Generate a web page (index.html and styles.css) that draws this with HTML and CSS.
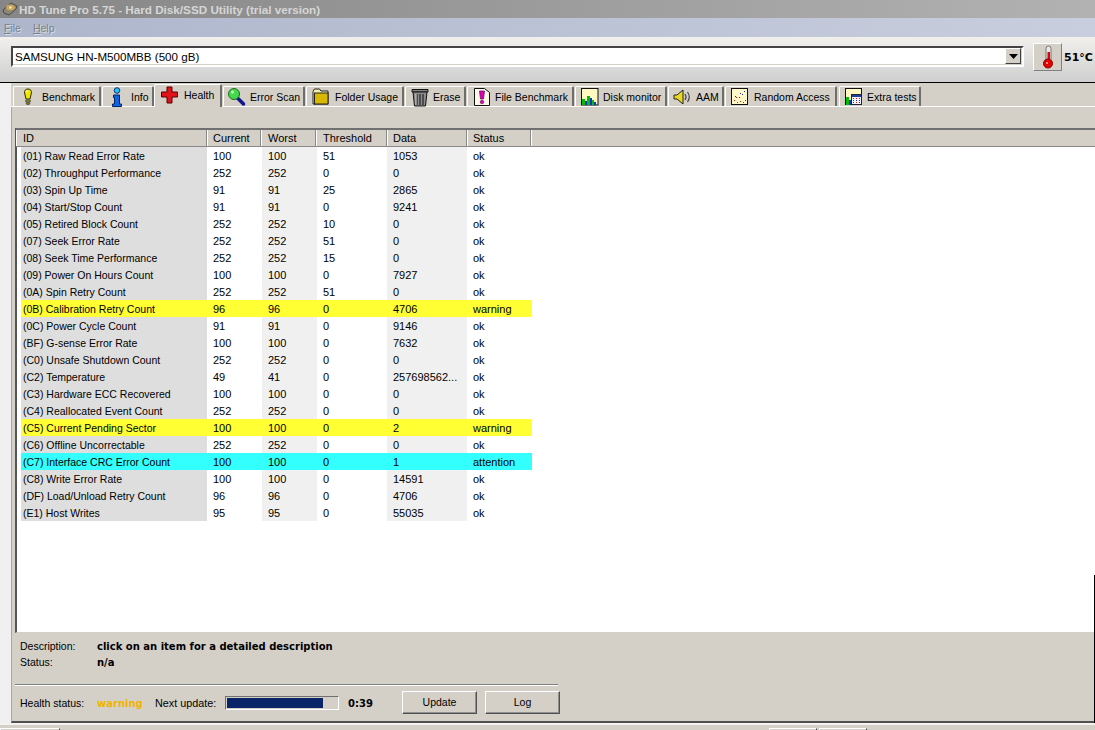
FILE: index.html
```html
<!DOCTYPE html>
<html lang="en">
<head>
<meta charset="utf-8">
<title>HD Tune Pro 5.75</title>
<link rel="stylesheet" href="styles.css">
</head>
<body>
<header class="titlebar">
  <svg class="app-icon" width="16" height="16" viewBox="0 0 16 16"><path d="M1 9 9 2l6 3-1 3-7 6-5-2z" fill="#8c8778" stroke="#4a4a44"/><ellipse cx="8.500" cy="6.500" rx="4.500" ry="3" fill="#c9a25a"/><circle cx="8.500" cy="6.500" r="1.300" fill="#efe9d8"/></svg>
  <span>HD Tune Pro 5.75 - Hard Disk/SSD Utility (trial version)</span>
</header>
<nav class="menubar"><span class="menu-item"><u>F</u>ile</span><span class="menu-item"><u>H</u>elp</span></nav>
<section class="toolbar">
  <div class="combo">
    <span class="combo-text">SAMSUNG HN-M500MBB (500 gB)</span>
    <span class="combo-btn"><svg width="9" height="5" viewBox="0 0 9 5"><path d="M0 0h9L4.500 5z" fill="#000"/></svg></span>
  </div>
  <button class="thermo"><svg width="12" height="24" viewBox="0 0 12 24"><rect x="4" y="1" width="5" height="17" rx="2.500" fill="#e8e8e8" stroke="#777"/><rect x="5.500" y="7" width="2.500" height="11" fill="#e30000"/><circle cx="6" cy="18.500" r="4.500" fill="#e30000" stroke="#8c0000"/><circle cx="5" cy="18" r="1" fill="#ffb0b0"/></svg></button>
  <strong class="temp">51°C</strong>
</section>

<main class="main">
  <div class="strip"></div>
  <div class="work">
    <div class="tabs">
      <div class="tab t-bench"><svg class="ico" width="18" height="20" viewBox="0 0 18 20"><path d="M9 2c2.800 0 3.800 2 3.400 4L11 12H7L5.600 6C5.200 4 6.200 2 9 2z" fill="#f2e600" stroke="#2a2a00"/><rect x="6.800" y="13" width="4.400" height="2" fill="#99942a" stroke="#333" stroke-width=".6"/><rect x="7.200" y="15.500" width="3.600" height="2" rx="1" fill="#77772a" stroke="#333" stroke-width=".6"/><path d="M7.500 5 8.200 3.500" stroke="#fff" stroke-width="1.200"/></svg><span>Benchmark</span></div>
      <div class="tab t-info"><svg class="ico" width="18" height="20" viewBox="0 0 18 20"><circle cx="9" cy="3.500" r="2.800" fill="#27c3ee" stroke="#0a2f80"/><path d="M5.500 8h6v9h2v2.500h-9V17h2v-6.500h-1z" fill="#0d64e6" stroke="#05205f"/></svg><span>Info</span></div>
      <div class="tab tab-on t-health"><svg class="ico" width="20" height="20" viewBox="0 0 20 20"><path d="M7 2h5v5h5.500v5H12v6H7v-6H1.500V7H7z" fill="#e2121a" stroke="#500" /></svg><span>Health</span></div>
      <div class="tab t-scan"><svg class="ico" width="20" height="20" viewBox="0 0 20 20"><path d="m10.500 11 6 6" stroke="#14148c" stroke-width="3.500" stroke-linecap="round"/><circle cx="7" cy="7" r="5.500" fill="#44d84a" stroke="#1b6d20"/><circle cx="5.500" cy="5" r="1.500" fill="#c9f7c9"/></svg><span>Error Scan</span></div>
      <div class="tab t-folder"><svg class="ico" width="18" height="20" viewBox="0 0 18 20"><path d="M1 4.500 2.500 2h5L9 4h7v13H1z" fill="#f4ecb0" stroke="#222"/><rect x="2.500" y="6" width="13.500" height="11" fill="#d8b800" stroke="#222"/></svg><span>Folder Usage</span></div>
      <div class="tab t-erase"><svg class="ico" width="18" height="20" viewBox="0 0 18 20"><path d="M1 2.500h16v2.500H1z" fill="#888" stroke="#111"/><path d="M2 5h14l-1.500 14h-11z" fill="#8c8c8c" stroke="#111"/><path d="M6 7v11M9 7v11M12 7v11" stroke="#222" stroke-width="1.200"/><path d="M5 7v11" stroke="#d0d0d0"/></svg><span>Erase</span></div>
      <div class="tab t-file"><svg class="ico" width="18" height="20" viewBox="0 0 18 20"><path d="M1.500 1.500h10l5 4v13h-15z" fill="#fff8e8" stroke="#111"/><path d="M6.500 4h5l-1 8h-3z" fill="#e000b8" stroke="#501050" stroke-width=".7"/><circle cx="9" cy="15" r="1.800" fill="#e000b8" stroke="#501050" stroke-width=".6"/></svg><span>File Benchmark</span></div>
      <div class="tab t-disk"><svg class="ico" width="18" height="18" viewBox="0 0 18 18"><rect x=".5" y=".5" width="16.500" height="16.500" fill="#fff8c0" stroke="#111"/><path d="M1 11h3v6H1z" fill="#00c000"/><path d="M4 13h2v4H4z" fill="#1030d0"/><path d="M6 8h3v9H6z" fill="#00c000"/><path d="M9 10h2v7H9z" fill="#1030d0"/><path d="M11 12h2v5h-2z" fill="#00c000"/><path d="M13 14h2v3h-2z" fill="#1030d0"/></svg><span>Disk monitor</span></div>
      <div class="tab t-aam"><svg class="ico" width="20" height="20" viewBox="0 0 20 20"><path d="M1 8h3l6-5v14l-6-5H1z" fill="#e8d820" stroke="#222"/><path d="M12 7q2 3 0 6M14.500 5q3.500 5 0 10" fill="none" stroke="#444" stroke-width="1.200"/></svg><span>AAM</span></div>
      <div class="tab t-rand"><svg class="ico" width="18" height="18" viewBox="0 0 18 18"><rect x=".5" y=".5" width="16" height="16" fill="#fff8c8" stroke="#111"/><path d="M3 12h1v1H3zM6 14h1v1H6zM9 13h1v1H9zM12 14h1v1h-1zM14 12h1v1h-1zM5 9h1v1H5z" fill="#e01010"/><path d="M4 8h1v1H4zM8 9h1v1H8zM11 6h1v1h-1zM13 3h1v1h-1zM9 5h1v1H9z" fill="#1030d0"/></svg><span>Random Access</span></div>
      <div class="tab t-extra"><svg class="ico" width="18" height="18" viewBox="0 0 18 18"><rect x=".5" y=".5" width="16" height="16" fill="#fff8c0" stroke="#111"/><path d="M1 9h3v8H1z" fill="#00c000"/><path d="M4 12h2v5H4z" fill="#1030d0"/><rect x="6.500" y="6.500" width="10" height="10" fill="#f4f4ff" stroke="#223"/><path d="M7 7h9v2H7z" fill="#2040a0"/><path d="M8 10h1v1H8zM11 10h1v1h-1zM14 10h1v1h-1zM8 12h1v1H8zM14 12h1v1h-1zM11 14h1v1h-1z" fill="#e01010"/><path d="M11 12h1v1h-1zM8 14h1v1H8zM14 14h1v1h-1z" fill="#1030d0"/></svg><span>Extra tests</span></div>
    </div>
    <div class="panel">
      <div class="list">
        <div class="head">
          <span>ID</span><span>Current</span><span>Worst</span><span>Threshold</span><span>Data</span><span>Status</span><span class="head-rest"></span>
        </div>
        <div class="row"><span>(01) Raw Read Error Rate</span><span>100</span><span>100</span><span>51</span><span>1053</span><span>ok</span></div>
        <div class="row"><span>(02) Throughput Performance</span><span>252</span><span>252</span><span>0</span><span>0</span><span>ok</span></div>
        <div class="row"><span>(03) Spin Up Time</span><span>91</span><span>91</span><span>25</span><span>2865</span><span>ok</span></div>
        <div class="row"><span>(04) Start/Stop Count</span><span>91</span><span>91</span><span>0</span><span>9241</span><span>ok</span></div>
        <div class="row"><span>(05) Retired Block Count</span><span>252</span><span>252</span><span>10</span><span>0</span><span>ok</span></div>
        <div class="row"><span>(07) Seek Error Rate</span><span>252</span><span>252</span><span>51</span><span>0</span><span>ok</span></div>
        <div class="row"><span>(08) Seek Time Performance</span><span>252</span><span>252</span><span>15</span><span>0</span><span>ok</span></div>
        <div class="row"><span>(09) Power On Hours Count</span><span>100</span><span>100</span><span>0</span><span>7927</span><span>ok</span></div>
        <div class="row"><span>(0A) Spin Retry Count</span><span>252</span><span>252</span><span>51</span><span>0</span><span>ok</span></div>
        <div class="row warn"><span>(0B) Calibration Retry Count</span><span>96</span><span>96</span><span>0</span><span>4706</span><span>warning</span></div>
        <div class="row"><span>(0C) Power Cycle Count</span><span>91</span><span>91</span><span>0</span><span>9146</span><span>ok</span></div>
        <div class="row"><span>(BF) G-sense Error Rate</span><span>100</span><span>100</span><span>0</span><span>7632</span><span>ok</span></div>
        <div class="row"><span>(C0) Unsafe Shutdown Count</span><span>252</span><span>252</span><span>0</span><span>0</span><span>ok</span></div>
        <div class="row"><span>(C2) Temperature</span><span>49</span><span>41</span><span>0</span><span>257698562...</span><span>ok</span></div>
        <div class="row"><span>(C3) Hardware ECC Recovered</span><span>100</span><span>100</span><span>0</span><span>0</span><span>ok</span></div>
        <div class="row"><span>(C4) Reallocated Event Count</span><span>252</span><span>252</span><span>0</span><span>0</span><span>ok</span></div>
        <div class="row warn"><span>(C5) Current Pending Sector</span><span>100</span><span>100</span><span>0</span><span>2</span><span>warning</span></div>
        <div class="row"><span>(C6) Offline Uncorrectable</span><span>252</span><span>252</span><span>0</span><span>0</span><span>ok</span></div>
        <div class="row attn"><span>(C7) Interface CRC Error Count</span><span>100</span><span>100</span><span>0</span><span>1</span><span>attention</span></div>
        <div class="row"><span>(C8) Write Error Rate</span><span>100</span><span>100</span><span>0</span><span>14591</span><span>ok</span></div>
        <div class="row"><span>(DF) Load/Unload Retry Count</span><span>96</span><span>96</span><span>0</span><span>4706</span><span>ok</span></div>
        <div class="row"><span>(E1) Host Writes</span><span>95</span><span>95</span><span>0</span><span>55035</span><span>ok</span></div>
      </div>
      <div class="info">
        <div class="info-row"><span class="lbl">Description:</span><b>click on an item for a detailed description</b></div>
        <div class="info-row"><span class="lbl">Status:</span><b>n/a</b></div>
      </div>
      <div class="divider"></div>
      <div class="statusbar">
        <span class="lbl">Health status:</span><b class="warning">warning</b>
        <span class="next">Next update:</span>
        <span class="progress"><span class="progress-fill"></span></span>
        <b class="time">0:39</b>
        <button class="btn btn-update">Update</button>
        <button class="btn">Log</button>
      </div>
    </div>
  </div>
  <div class="edge"></div>
</main>
<footer class="foot">
  <span class="foot-tab foot-a"></span>
  <span class="foot-tab foot-b"></span>
  <span class="foot-tab foot-c"></span>
</footer>
</body>
</html>
```
FILE: styles.css
```css
* { box-sizing: border-box; }
html, body { margin: 0; padding: 0; }
body {
  width: 1095px; height: 730px; overflow: hidden;
  display: flex; flex-direction: column;
  font: 11px/14px "Liberation Sans", Arial, sans-serif;
  color: #000; background: #d4d0c8;
}
b, strong { font-family: "DejaVu Sans", Verdana, sans-serif; font-size: 10px; font-weight: 700; }

.titlebar {
  height: 18px; display: flex; align-items: center; gap: 1px; padding-left: 2px;
  background: linear-gradient(90deg, #868686, #b2b2b2);
  color: #d6d6d6; font: 700 11.7px/19px "Liberation Sans", Arial, sans-serif;
}
.menubar {
  height: 19px; display: flex; gap: 12px; padding: 1px 0 0 4px; align-items: center;
  font-size: 10.5px;
  background: linear-gradient(90deg, #aeb6cc, #c8cedd);
  color: #808080; text-shadow: 1px 1px 0 #d8dce6;
}
.toolbar {
  height: 46px; display: flex; align-items: flex-start; padding: 6px 0 0 11px;
  border-bottom: 1px solid #000;
  background: linear-gradient(180deg, #f1f0ed, #cfcfcf);
}
.combo {
  width: 1013px; height: 21px; margin-top: 3px; display: flex; justify-content: space-between;
  background: #fff;
  border: 2px solid; border-color: #444 #fff #fff #444;
  box-shadow: inset -1px -1px 0 #d4d0c8;
}
.combo-text { padding-left: 2px; line-height: 18px; font-size: 11.6px; }
.combo-btn {
  width: 16px; height: 16px; margin: 0 1px 1px 0; display: flex; align-items: center; justify-content: center;
  background: #d4d0c8; border: 1px solid; border-color: #fff #404040 #404040 #fff;
}
.thermo {
  width: 29px; height: 28px; margin-left: 9px; padding: 0; display: flex; align-items: center; justify-content: center;
  background: #d4d0c8; border: 1px solid; border-color: #fff #808080 #808080 #fff;
}
.temp { margin: 8px 0 0 2px; line-height: 14px; font-size: 11px; }

.main { flex: 1; display: flex; position: relative; min-height: 0; }
.strip { width: 11px; background: #f0f0f0; }
.work { flex: 1; min-width: 0; display: flex; flex-direction: column; }
.edge { position: absolute; right: 0; top: 492px; bottom: 0; width: 1px; background: #000; }

.tabs {
  height: 24px; display: flex; gap: 1px; padding: 3px 0 0 2px;
  border-bottom: 1px solid #fff;
  font-size: 10.5px;
}
.tab {
  height: 20px; display: flex; align-items: center; gap: 0; padding-left: 5px;
  border-top: 1px solid #fff; border-left: 1px solid #fff; border-right: 2px solid #6e6e6e;
  border-radius: 2px 2px 0 0;
  white-space: nowrap;
}
.ico { flex: none; margin-right: 5px; }
.tab-on { height: 23px; margin-top: -2px; margin-right: 0; padding-bottom: 3px; z-index: 1; background: #d4d0c8; }
.t-bench { width: 88px; }
.t-info { width: 52px; }
.t-health { width: 68px; margin-left: -1px; }
.t-health .ico { margin-right: 4px; }
.t-scan { width: 82px; padding-left: 3px; }
.t-scan .ico { margin-right: 3px; }
.t-folder { width: 98px; }
.t-erase { width: 61px; }
.t-file { width: 107px; }
.t-disk { width: 92px; }
.t-aam { width: 56px; padding-left: 4px; }
.t-aam .ico { margin-right: 3px; }
.t-rand { width: 112px; margin-right: 1px; }
.t-extra { width: 82px; }
.t-erase .ico, .t-file .ico, .t-disk .ico, .t-extra .ico { margin-right: 4px; }

.panel {
  flex: 1; min-height: 0; display: flex; flex-direction: column;
  padding: 21px 0 0 3px;
  border-left: 1px solid #a8a8a8;
  border-bottom: 2px solid #505050;
}
.list {
  height: 505px; margin-left: 0; background: #fff;
  border-top: 2px solid #707070; border-left: 2px solid #555;
  border-bottom: 1px solid #d4d0c8;
}
.head, .row { display: flex; line-height: 17px; white-space: nowrap; }
.head { height: 17px; background: #d4d0c8; border-bottom: 1px solid #888; margin-left: -1px; }
.head span {
  padding-left: 5px; height: 16px; line-height: 16px;
  border-left: 1px solid #fff; border-right: 1px solid #888;
}
.head span:nth-child(1) { width: 191px; padding-left: 6px; }
.head span:nth-child(2) { width: 54px; }
.head span:nth-child(3) { width: 55px; padding-left: 6px; }
.head span:nth-child(4) { width: 71px; padding-left: 6px; }
.head span:nth-child(5) { width: 80px; }
.head span:nth-child(6) { width: 64px; }
.head .head-rest { flex: 1; border-right: 0; }

.row { height: 17px; width: 511px; margin-left: 4px; }
.row span { padding-left: 6px; overflow: hidden; line-height: 19px; }
.row span:nth-child(1) { width: 186px; padding-left: 2px; background: #dedede; font-size: 10.5px; }
.row span:nth-child(2) { width: 55px; }
.row span:nth-child(3) { width: 55px; background: #f0f0f0; }
.row span:nth-child(4) { width: 70px; }
.row span:nth-child(5) { width: 80px; background: #f0f0f0; }
.row span:nth-child(6) { width: 65px; }
.warn span:nth-child(n) { background: #ffff33; }
.attn span:nth-child(n) { background: #33ffff; }

.info { height: 51px; padding: 5px 0 0 5px; }
.info-row { display: flex; height: 16px; line-height: 16px; }
.info-row b { line-height: 18px; }
.lbl { width: 77px; flex: none; font-size: 10.5px; }
.divider { width: 543px; height: 2px; background: #808080; border-bottom: 1px solid #fff; }
.statusbar { display: flex; align-items: center; height: 33px; padding: 0 0 0 5px; }
.statusbar b { padding-top: 2px; }
.warning { width: 58px; color: #f0b400; }
.next { width: 70px; font-size: 10.8px; }
.progress {
  width: 114px; height: 14px; padding: 1px; margin-right: 9px;
  background: #d4d0c8; border: 1px solid; border-color: #707070 #fff #fff #707070;
}
.progress-fill { display: block; height: 100%; width: 87%; background: #0a2468; }
.time { width: 54px; }
.btn {
  width: 75px; height: 23px; padding: 0 0 2px; margin-right: 8px;
  background: #d4d0c8; color: #000; font: 10.5px "Liberation Sans", Arial, sans-serif;
  border: 1px solid; border-color: #fff #505050 #505050 #fff;
  box-shadow: inset -1px -1px 0 #909090;
}

.foot { height: 7px; position: relative; border-top: 2px solid #f4f2ee; }
.foot-tab { position: absolute; top: 3px; height: 4px; background: #d4d0c8; border-top: 1px solid #fff; border-left: 1px solid #fff; border-right: 1px solid #404040; }
.foot-a { left: 0; width: 60px; }
.foot-b { left: 769px; width: 48px; }
.foot-c { left: 819px; width: 48px; }
```
